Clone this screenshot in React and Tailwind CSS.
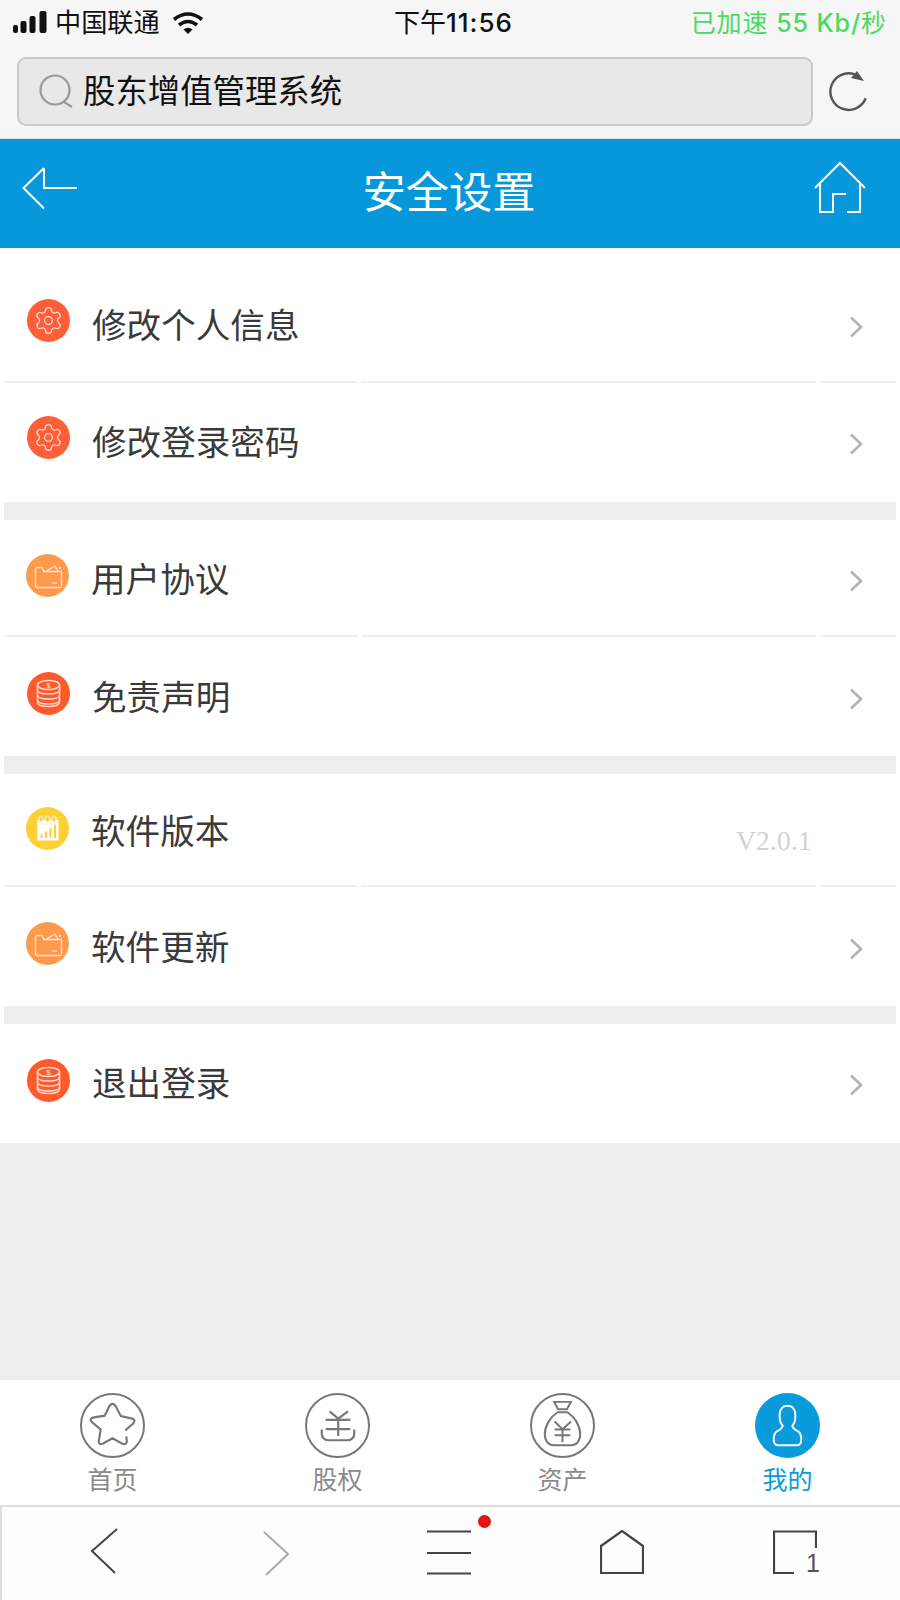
import React from "react";
import { Settings } from "lucide-react";

const GearIcon = () => (
  <div className="w-[43px] h-[43px] rounded-full bg-[#ff5f38] flex items-center justify-center">
    <Settings size={31} strokeWidth={0.9} color="#ffe3da" />
  </div>
);

const WalletIcon = () => (
  <div className="w-[43px] h-[43px] rounded-full bg-[#ff9a4c]">
    <svg width="43" height="43" viewBox="0 0 43 43" fill="none" stroke="#ffe6d2" strokeWidth="1.3">
      <path d="M9.5 30V15.5Q9.5 13.5 11.5 13.5H16L18 17.5H34Q35.5 17.5 35.5 19V32Q35.5 33.5 34 33.5H11.5Q9.5 33.5 9.5 31.5Z" />
      <path d="M20 17L29 12L32 17" />
      <path d="M26 29H31" />
      <circle cx="34" cy="14" r="0.6" />
    </svg>
  </div>
);

const CoinsIcon = () => (
  <div className="w-[43px] h-[43px] rounded-full bg-[#ff5a2b]">
    <svg width="43" height="43" viewBox="0 0 43 43" fill="none" stroke="#ffdcd0" strokeWidth="1.5">
      <ellipse cx="21.5" cy="13" rx="11" ry="4.6" />
      <path d="M10.5 13V18Q10.5 22 21.5 22T32.5 18V13" />
      <path d="M10.5 18V23Q10.5 27 21.5 27T32.5 23V18" />
      <path d="M10.5 23V28Q10.5 32 21.5 32T32.5 28V23" />
      <path d="M10.5 28V30Q10.5 34.5 21.5 34.5T32.5 30V28" />
      <text x="21.5" y="15.6" textAnchor="middle" fontSize="8" fill="#ffdcd0" stroke="none" fontFamily="Liberation Sans">$</text>
    </svg>
  </div>
);

const ChartIcon = () => (
  <div className="w-[43px] h-[43px] rounded-full bg-[#ffd034]">
    <svg width="43" height="43" viewBox="0 0 43 43">
      <path d="M11 13H32.5V33.5H11Z" fill="#fff" />
      {[15, 21.5, 28].map((x) => (
        <rect key={x} x={x - 2} y="9" width="4" height="6" rx="2" fill="#ffd034" stroke="#fff" strokeWidth="1" />
      ))}
      <rect x="14.5" y="27.5" width="2" height="3.5" fill="#ffd034" />
      <rect x="19" y="24.5" width="2" height="6.5" fill="#ffd034" />
      <rect x="23.5" y="21" width="2" height="10" fill="#ffd034" />
      <rect x="28" y="17.5" width="2" height="13.5" fill="#ffd034" />
    </svg>
  </div>
);

const Chevron = () => (
  <svg width="14" height="22" viewBox="0 0 14 22" fill="none" stroke="#b5b5b5" strokeWidth="2.8">
    <path d="M2 1.5L12 11L2 20.5" />
  </svg>
);

const Divider = () => (
  <div className="flex h-[2px] gap-[4px] mx-[4px] bg-white">
    <div className="w-[353px] bg-[#eeeeee]" />
    <div className="w-[455px] bg-[#eeeeee]" />
    <div className="w-[76px] bg-[#eeeeee]" />
  </div>
);

const Band = ({ className }) => <div className={`mx-[4px] bg-[#eeeeee] ${className}`} />;

const Row = ({ icon, label, rowClass, iconClass, version }) => (
  <div className={`flex items-center bg-white ${rowClass}`}>
    <div className={iconClass}>{icon}</div>
    <span className="ml-[22px] text-[34.6px] leading-[46px] text-[#3a3a3a]">{label}</span>
    {version ? (
      <span className="ml-auto mr-[88px] mt-[17px] text-[27.5px] leading-[36px] tracking-[0.2px] text-[#d2d2d2] font-['Liberation_Serif',serif]">
        {version}
      </span>
    ) : (
      <div className="ml-auto mr-[37px] mt-[2px]">
        <Chevron />
      </div>
    )}
  </div>
);

const TabCircle = ({ children, active }) => (
  <svg width="65" height="65" viewBox="0 0 66 66" fill="none">
    <circle
      cx="33"
      cy="33"
      r={active ? 33 : 32}
      fill={active ? "#0a9bdc" : "none"}
      stroke={active ? "none" : "#777777"}
      strokeWidth="2"
    />
    {children}
  </svg>
);

const tabs = [
  {
    label: "首页",
    icon: (
      <TabCircle>
        <path
          d="M46 38L54 31Q57 27 53 26L41.5 23.5L36 13Q33 9 30 13L25 23L13 25Q9 26.5 12 29.5L21 37L19 49Q19 53 23 51.5L33 46L43 51.5Q47.5 53 47.5 49L47 44"
          stroke="#777777"
          strokeWidth="2.2"
        />
      </TabCircle>
    ),
  },
  {
    label: "股权",
    icon: (
      <TabCircle>
        <path
          d="M25 18.7L33.7 26L43.7 18.7M21 27.3H46M21 36.7H46M33.7 26V43.7M17 37V41Q17 48 25 48H42Q50 48 50 41V37"
          stroke="#777777"
          strokeWidth="2.2"
        />
      </TabCircle>
    ),
  },
  {
    label: "资产",
    icon: (
      <TabCircle>
        <path d="M24.5 9H41.5L37.5 16.5H28.5Z" stroke="#777777" strokeWidth="2" />
        <path
          d="M28 19.5H38C45 24 51 33 51 42C51 49 47 53 42 53H24C19 53 15 49 15 42C15 33 21 24 28 19.5Z"
          stroke="#777777"
          strokeWidth="2"
        />
        <path d="M25 29L33 36.7L41.7 29M25 37H41M25 43H41M33 37V50" stroke="#777777" strokeWidth="2" />
      </TabCircle>
    ),
  },
  {
    label: "我的",
    active: true,
    icon: (
      <TabCircle active>
        <path
          d="M33 13C27 13 25 17 25 23C25 28 26 31 28 33C28 36 26 37 23 38.5C20 40 19 42 19 47C19 51 20 53 23 53H43C46 53 47 51 47 47C47 42 46 40 43 38.5C40 37 38 36 38 33C40 31 41 28 41 23C41 17 39 13 33 13Z"
          stroke="#ffffff"
          strokeWidth="2"
        />
      </TabCircle>
    ),
  },
];

const App = () => {
  return (
    <div className="w-[900px] h-[1600px] flex flex-col bg-[#eeeeee] overflow-hidden font-['Liberation_Sans','Noto_Sans_CJK_SC',sans-serif]">
      {/* Status bar */}
      <div className="h-[50px] flex items-center pl-[13px] pr-[13px] pb-[4px] bg-[#f6f6f6]">
        <div className="w-[381px] flex items-center">
          <svg width="36" height="24" viewBox="0 0 36 24" fill="#111111">
            <rect x="0" y="14" width="5" height="8" rx="2" />
            <rect x="7.5" y="10" width="6" height="12" rx="2" />
            <rect x="16.5" y="5" width="6" height="17" rx="2" />
            <rect x="26.5" y="0" width="7" height="22" rx="2" />
          </svg>
          <span className="ml-[6px] text-[26.2px] leading-[32px] text-[#111111]">中国联通</span>
          <svg className="ml-[12px]" width="32" height="24" viewBox="0 0 32 24" fill="none" stroke="#111111" strokeWidth="3.6">
            <path d="M2 8.5Q16 -2.5 30 8.5" />
            <path d="M7 14Q16 7 25 14" />
            <path d="M11.5 18.5L16 23L20.5 18.5Q16 15 11.5 18.5Z" fill="#111111" stroke="none" />
          </svg>
        </div>
        <span className="text-[26px] leading-[32px] text-[#111111]">
          下午<span className="font-medium tracking-[1px] font-['Inter',sans-serif]">11:56</span>
        </span>
        <span className="ml-auto text-[25px] leading-[32px] tracking-[0.9px] text-[#4cd964]">
          已加速 <span className="font-medium font-['Inter',sans-serif]">55 Kb/</span>秒
        </span>
      </div>

      {/* Address bar */}
      <div className="h-[89px] flex items-start bg-[#f6f6f6] border-b border-[#dddddd] pl-[17px]">
        <div className="mt-[7px] w-[796px] h-[69px] flex items-center rounded-[9px] border-2 border-[#c9c9c9] bg-[#e8e8e8] pl-[20px]">
          <svg width="36" height="36" viewBox="0 0 36 36" fill="none" stroke="#999999" strokeWidth="2.2">
            <circle cx="16" cy="16" r="14.5" />
            <path d="M25 28L33 33" />
          </svg>
          <span className="ml-[8px] text-[32.4px] leading-[44px] text-[#111111]">股东增值管理系统</span>
        </div>
        <svg className="mt-[18px] ml-[13px]" width="44" height="44" viewBox="0 0 44 44" fill="none" stroke="#555555" strokeWidth="2.4">
          <path d="M28.7 6.3A18.3 18.3 0 1 0 39.7 30.3" />
          <path d="M38 13L31 3L25 10Z" fill="#555555" stroke="none" />
        </svg>
      </div>

      {/* Header */}
      <div className="h-[109px] flex items-center justify-between bg-[#0798dc] pl-[22px] pr-[34px]">
        <svg className="mb-[9px]" width="56" height="44" viewBox="0 0 56 44" fill="none" stroke="#ffffff" strokeWidth="2">
          <path d="M22 1L1.5 21L22 41.5M22 1V21H55" />
        </svg>
        <span className="ml-[6px] pb-[2px] text-[43.3px] leading-[56px] text-white">安全设置</span>
        <svg className="mb-[13px]" width="52" height="52" viewBox="0 0 52 52" fill="none" stroke="#ffffff" strokeWidth="2">
          <path d="M1 27L26 2L51 27" />
          <path d="M6 22V51H19V33H32" />
          <path d="M46 22V51H33" />
        </svg>
      </div>

      {/* List */}
      <div className="h-[895px] flex flex-col bg-white">
        <Row icon={<GearIcon />} label="修改个人信息" rowClass="h-[133px] pt-[23px]" iconClass="ml-[27px] mb-[12px]" />
        <Divider />
        <Row icon={<GearIcon />} label="修改登录密码" rowClass="h-[119px]" iconClass="ml-[27px] mb-[11px]" />
        <Band className="h-[18px]" />
        <Row icon={<WalletIcon />} label="用户协议" rowClass="h-[115px] pt-[5px]" iconClass="ml-[26px] mb-[10px]" />
        <Divider />
        <Row icon={<CoinsIcon />} label="免责声明" rowClass="h-[119px] pt-[3px]" iconClass="ml-[27px] mb-[10px]" />
        <Band className="h-[18px]" />
        <Row icon={<ChartIcon />} label="软件版本" rowClass="h-[111px] pt-[5px]" iconClass="ml-[26px] mb-[8px]" version="V2.0.1" />
        <Divider />
        <Row icon={<WalletIcon />} label="软件更新" rowClass="h-[119px] pt-[2px]" iconClass="ml-[26px] mb-[9px]" />
        <Band className="h-[18px]" />
        <Row icon={<CoinsIcon />} label="退出登录" rowClass="h-[119px] pt-[1px]" iconClass="ml-[27px] mb-[8px]" />
      </div>

      <div className="flex-1" />

      {/* Tab bar */}
      <div className="h-[125px] grid grid-cols-4 bg-white">
        {tabs.map((tab) => (
          <div key={tab.label} className="flex flex-col items-center pt-[13px]">
            {tab.icon}
            <span className={`mt-[6px] text-[25px] leading-[32px] ${tab.active ? "text-[#0a9bdc]" : "text-[#8a8a8a]"}`}>
              {tab.label}
            </span>
          </div>
        ))}
      </div>

      {/* Browser toolbar */}
      <div className="h-[95px] flex items-start border-t-2 border-l-2 border-[#dddddd] bg-[#fdfdfd] pt-[23px] pl-[88px]">
        <svg className="-mt-[2px]" width="28" height="46" viewBox="0 0 28 46" fill="none" stroke="#444444" strokeWidth="2">
          <path d="M27 1L2 23L25 45" />
        </svg>
        <svg className="ml-[144px]" width="28" height="46" viewBox="0 0 28 46" fill="none" stroke="#aaaaaa" strokeWidth="2">
          <path d="M2 2L26 24L4 45" />
        </svg>
        <div className="relative ml-[136px]">
          <svg width="46" height="46" viewBox="0 0 46 46" fill="none" stroke="#444444" strokeWidth="2">
            <path d="M1 1.5H45M1 23H45M1 43.5H45" />
          </svg>
          <div className="absolute -top-[15px] left-[52px] w-[13px] h-[13px] rounded-full bg-[#e01414]" />
        </div>
        <svg className="ml-[128px]" width="44" height="46" viewBox="0 0 44 46" fill="none" stroke="#444444" strokeWidth="2.2">
          <path d="M22 1L43 16V43H1V16Z" />
        </svg>
        <div className="relative ml-[129px] w-[44px] h-[46px]">
          <svg width="44" height="46" viewBox="0 0 44 46" fill="none" stroke="#444444" strokeWidth="2.2">
            <path d="M43 18V1.5H1V43H21" />
          </svg>
          <span className="absolute right-[-3px] bottom-[0px] text-[25px] leading-[26px] text-[#555555]">1</span>
        </div>
      </div>
    </div>
  );
};

export default App;
